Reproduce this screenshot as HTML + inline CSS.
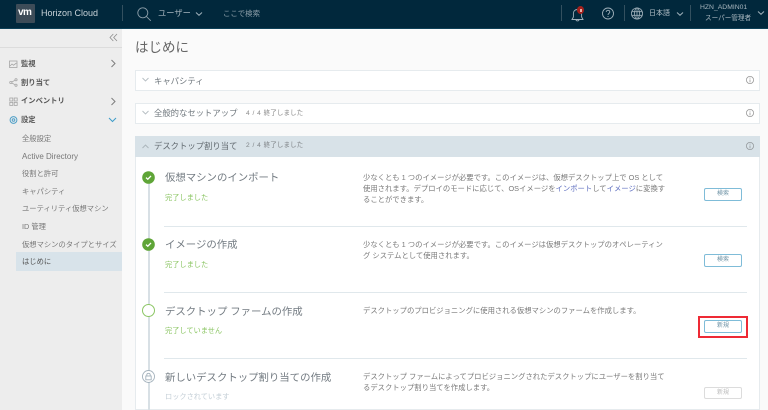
<!DOCTYPE html>
<html lang="ja">
<head>
<meta charset="utf-8">
<title>Horizon Cloud</title>
<style>
html,body{margin:0;padding:0;width:768px;height:410px;overflow:hidden;background:#fafafa;}
body{position:relative;font-family:"Liberation Sans","Noto Sans CJK JP",sans-serif;color:#666;}
div,span,svg{position:absolute;box-sizing:border-box;}
.t{white-space:nowrap;line-height:1;filter:blur(.35px);}
span.i{position:static;}
.nav{font-size:7.3px;color:#777;left:22px;}
.main{font-size:7.3px;color:#555;font-weight:bold;left:21px;}
.panel{left:135px;width:625px;height:21px;background:#fff;border:1px solid #e6ebee;}
.ph{font-size:8.35px;color:#6f777d;left:154px;}
.sub{font-size:6.6px;color:#8b8b8b;left:246px;}
.h{font-size:10.4px;color:#737b82;left:165px;}
.st{font-size:7.2px;color:#8cc665;left:165px;}
.d{font-size:7.34px;color:#7a7a7a;left:363px;line-height:11px;white-space:nowrap;filter:blur(.35px);}
.btn{left:704px;width:38px;height:13px;border:1px solid #7fbcd8;border-radius:2px;background:#fff;font-size:6px;color:#6f93a6;text-align:center;line-height:11px;}
.hr{left:164px;width:583px;height:1px;background:#e0e8ec;}
</style>
</head>
<body>
<!-- header -->
<div style="left:0;top:0;width:768px;height:29px;background:#01283c;border-bottom:1px solid #0d4057;"></div>
<div style="left:16px;top:4px;width:19px;height:19px;background:#3d4c58;border-radius:1px;"></div>
<div class="t" style="left:18px;top:8px;font-size:10px;font-weight:bold;color:#fff;letter-spacing:-.5px;">vm</div>
<div class="t" style="left:41px;top:9px;font-size:9px;color:#c9d3d9;">Horizon Cloud</div>
<div style="left:122px;top:5px;width:1px;height:16px;background:#33505f;"></div>
<svg style="left:136px;top:6px" width="16" height="16" viewBox="0 0 16 16" fill="none" stroke="#8a9ca7" stroke-width=".9"><circle cx="6.8" cy="6.8" r="5"/><path d="M10.4 10.4L14.8 14.8"/></svg>
<div class="t" style="left:158px;top:9.5px;font-size:8.25px;color:#a8b6be;">ユーザー</div>
<svg style="left:194px;top:11px" width="10" height="6" viewBox="0 0 10 6" fill="none" stroke="#9fb0ba"><path d="M2 1.5L5 4.3L8 1.5"/></svg>
<div class="t" style="left:223px;top:9.5px;font-size:7.4px;color:#8fa1ab;">ここで検索</div>
<div style="left:561px;top:5px;width:1px;height:16px;background:#33505f;"></div>
<svg style="left:570px;top:6px" width="16" height="16" viewBox="0 0 16 16" fill="none" stroke="#9fb0ba" stroke-width=".9"><path d="M2 13.5H13L11.6 11V7.5C11.6 5 10 3.5 7.5 3.5S3.4 5 3.4 7.5V11Z"/><path d="M6 13.5C6 15.4 9 15.4 9 13.5"/></svg>
<div style="left:577px;top:6px;width:7px;height:8px;border-radius:50%;background:#a3211d;"></div>
<div style="left:579.5px;top:8.5px;width:2px;height:3px;background:#e8b0a8;"></div>
<svg style="left:601px;top:6px" width="14" height="15" viewBox="0 0 14 15" fill="none" stroke="#9fb0ba" stroke-width=".9"><circle cx="7" cy="7.5" r="5.5"/><path d="M5.2 6C5.2 3.8 8.8 3.8 8.8 6C8.8 7.4 7 7.4 7 9"/><path d="M7 10V11"/></svg>
<div style="left:624px;top:5px;width:1px;height:16px;background:#33505f;"></div>
<svg style="left:630px;top:6px" width="14" height="15" viewBox="0 0 14 15" fill="none" stroke="#9fb0ba" stroke-width=".8"><circle cx="7" cy="7.5" r="5.6"/><ellipse cx="7" cy="7.5" rx="2.5" ry="5.6"/><path d="M7 2V13M1.6 5.7H12.4M1.6 9.3H12.4"/></svg>
<div class="t" style="left:649px;top:9.5px;font-size:7px;color:#b4c0c7;">日本語</div>
<svg style="left:675px;top:11px" width="10" height="6" viewBox="0 0 10 6" fill="none" stroke="#9fb0ba"><path d="M2 1.5L5 4.3L8 1.5"/></svg>
<div style="left:690px;top:5px;width:1px;height:16px;background:#33505f;"></div>
<div class="t" style="left:700px;top:5.4px;font-size:6.8px;color:#a8b6be;">HZN_ADMIN01</div>
<div class="t" style="left:705px;top:16.3px;font-size:6.6px;color:#a8b6be;">スーパー管理者</div>
<svg style="left:756px;top:10px" width="10" height="6" viewBox="0 0 10 6" fill="none" stroke="#9fb0ba"><path d="M2 1.5L5 4.3L8 1.5"/></svg>

<!-- sidebar -->
<div style="left:0;top:29px;width:122px;height:381px;background:#ededed;"></div>
<div style="left:0;top:47px;width:122px;height:1px;background:#dcdcdc;"></div>
<svg style="left:109px;top:33px" width="9" height="9" viewBox="0 0 9 9" fill="none" stroke="#8d8d8d" stroke-width=".8"><path d="M4.3 1L1 4.5L4.3 8M8 1L4.7 4.5L8 8"/></svg>

<svg style="left:9px;top:60px" width="9" height="9" viewBox="0 0 9 9" fill="none" stroke="#a5a5a5" stroke-width=".8"><rect x=".5" y="1" width="7.5" height="6.5"/><path d="M1 6L3 4L4.5 5.2L7.5 3"/></svg>
<div class="t main" style="top:59.5px;">監視</div>
<svg style="left:110px;top:59px" width="7" height="9" viewBox="0 0 7 9" fill="none" stroke="#7d7d7d"><path d="M1.5 1L5 4.5L1.5 8"/></svg>

<svg style="left:9px;top:78px" width="9" height="9" viewBox="0 0 9 9" fill="none" stroke="#a5a5a5" stroke-width=".8"><circle cx="1.8" cy="4.5" r="1.1"/><circle cx="7" cy="1.8" r="1.1"/><circle cx="7" cy="7.2" r="1.1"/><path d="M2.8 4L6 2.3M2.8 5L6 6.7"/></svg>
<div class="t main" style="top:78.5px;">割り当て</div>

<svg style="left:9px;top:97px" width="9" height="9" viewBox="0 0 9 9" fill="none" stroke="#a5a5a5" stroke-width=".8"><rect x=".8" y="1" width="3" height="3"/><rect x="5.2" y="1" width="3" height="3"/><rect x=".8" y="5.4" width="3" height="3"/><rect x="5.2" y="5.4" width="3" height="3"/></svg>
<div class="t main" style="top:97px;">インベントリ</div>
<svg style="left:110px;top:97px" width="7" height="9" viewBox="0 0 7 9" fill="none" stroke="#7d7d7d"><path d="M1.5 1L5 4.5L1.5 8"/></svg>

<svg style="left:9px;top:115px" width="9" height="10" viewBox="0 0 9 10" fill="none" stroke="#4f9fc7" stroke-width="1"><circle cx="4.5" cy="5" r="3.4"/><circle cx="4.5" cy="5" r="1.3"/></svg>
<div class="t main" style="top:116px;">設定</div>
<svg style="left:108px;top:117px" width="9" height="6" viewBox="0 0 9 6" fill="none" stroke="#3d9cc9"><path d="M1 1L4.5 4.5L8 1"/></svg>

<div class="t nav" style="top:134.5px;">全般設定</div>
<div class="t nav" style="top:152.5px;font-size:8px;">Active Directory</div>
<div class="t nav" style="top:169.5px;">役割と許可</div>
<div class="t nav" style="top:187.5px;">キャパシティ</div>
<div class="t nav" style="top:205px;">ユーティリティ仮想マシン</div>
<div class="t nav" style="top:222.5px;">ID 管理</div>
<div class="t nav" style="top:240.5px;">仮想マシンのタイプとサイズ</div>
<div style="left:16px;top:252px;width:106px;height:19px;background:#d8e3ea;"></div>
<div class="t nav" style="top:257.5px;color:#555;">はじめに</div>

<!-- main -->
<div class="t" style="left:135px;top:41px;font-size:13.5px;color:#666;">はじめに</div>

<div class="panel" style="top:70px;"></div>
<svg style="left:141px;top:77px" width="9" height="6" viewBox="0 0 9 6" fill="none" stroke="#b5bdc2" stroke-width=".9"><path d="M1.5 1L4.5 4L7.5 1"/></svg>
<div class="t ph" style="top:76.5px;">キャパシティ</div>
<svg style="left:745px;top:75px" width="10" height="10" viewBox="0 0 10 10" fill="none" stroke="#9a9a9a" stroke-width=".8"><circle cx="5" cy="5" r="3.6"/><path d="M5 4.5V7.4M5 2.6V3.6"/></svg>

<div class="panel" style="top:103px;"></div>
<svg style="left:141px;top:110px" width="9" height="6" viewBox="0 0 9 6" fill="none" stroke="#b5bdc2" stroke-width=".9"><path d="M1.5 1L4.5 4L7.5 1"/></svg>
<div class="t ph" style="top:109px;">全般的なセットアップ</div>
<div class="t sub" style="top:110.5px;word-spacing:1px;">4 / 4 終了しました</div>
<svg style="left:745px;top:108px" width="10" height="10" viewBox="0 0 10 10" fill="none" stroke="#9a9a9a" stroke-width=".8"><circle cx="5" cy="5" r="3.6"/><path d="M5 4.5V7.4M5 2.6V3.6"/></svg>

<div style="left:135px;top:136px;width:625px;height:274px;background:#fff;border:1px solid #e6ebee;"></div>
<div style="left:135px;top:136px;width:625px;height:21px;background:#d8e2e8;"></div>
<svg style="left:141px;top:143px" width="9" height="6" viewBox="0 0 9 6" fill="none" stroke="#aab4ba" stroke-width=".9"><path d="M1.5 5L4.5 2L7.5 5"/></svg>
<div class="t ph" style="top:142px;color:#626a70;">デスクトップ割り当て</div>
<div class="t sub" style="top:143px;color:#808589;word-spacing:1px;">2 / 4 終了しました</div>
<svg style="left:745px;top:141px" width="10" height="10" viewBox="0 0 10 10" fill="none" stroke="#959a9d" stroke-width=".8"><circle cx="5" cy="5" r="3.6"/><path d="M5 4.5V7.4M5 2.6V3.6"/></svg>

<div style="left:148px;top:177px;width:2px;height:233px;background:#d8e0e5;"></div>

<!-- step 1 -->
<svg style="left:142px;top:171px" width="13" height="13" viewBox="0 0 13 13"><circle cx="6.5" cy="6.5" r="6.3" fill="#5fa537"/><path d="M4 6.6L5.8 8.2L9 4.9" fill="none" stroke="#fff" stroke-width="1.3"/></svg>
<div class="t h" style="top:173.5px;">仮想マシンのインポート</div>
<div class="t st" style="top:194px;">完了しました</div>
<div class="d" style="top:172px;">少なくとも 1 つのイメージが必要です。このイメージは、仮想デスクトップ上で OS として<br>使用されます。デプロイのモードに応じて、OSイメージを<span class="i" style="color:#5f6fc0;">インポート</span>して<span class="i" style="color:#5f6fc0;">イメージ</span>に変換す<br>ることができます。</div>
<div class="btn" style="top:188px;">検索</div>
<div class="hr" style="top:226px;"></div>

<!-- step 2 -->
<svg style="left:142px;top:238px" width="13" height="13" viewBox="0 0 13 13"><circle cx="6.5" cy="6.5" r="6.3" fill="#5fa537"/><path d="M4 6.6L5.8 8.2L9 4.9" fill="none" stroke="#fff" stroke-width="1.3"/></svg>
<div class="t h" style="top:241px;">イメージの作成</div>
<div class="t st" style="top:260.5px;">完了しました</div>
<div class="d" style="top:239px;">少なくとも 1 つのイメージが必要です。このイメージは仮想デスクトップのオペレーティン<br>グ システムとして使用されます。</div>
<div class="btn" style="top:254px;">検索</div>
<div class="hr" style="top:292px;"></div>

<!-- step 3 -->
<div style="left:142px;top:304px;width:13px;height:13px;border-radius:50%;background:#fff;border:1.5px solid #8cc665;"></div>
<div class="t h" style="top:307.5px;">デスクトップ ファームの作成</div>
<div class="t st" style="top:326.5px;">完了していません</div>
<div class="d" style="top:305px;">デスクトップのプロビジョニングに使用される仮想マシンのファームを作成します。</div>
<div style="left:698px;top:316px;width:50px;height:22px;border:2px solid #ee2a35;"></div>
<div class="btn" style="top:320px;">新規</div>
<div class="hr" style="top:358px;"></div>

<!-- step 4 -->
<svg style="left:142px;top:370px" width="13" height="13" viewBox="0 0 13 13" fill="#fff" stroke="#a4b2bc" stroke-width=".9"><circle cx="6.5" cy="6.5" r="6"/><rect x="3.8" y="6" width="5.4" height="3.8"/><path d="M4.8 6V4.8C4.8 2.8 8.2 2.8 8.2 4.8V6" fill="none"/></svg>
<div class="t h" style="top:373.5px;">新しいデスクトップ割り当ての作成</div>
<div class="t st" style="top:392.5px;color:#c3ced6;">ロックされています</div>
<div class="d" style="top:371px;">デスクトップ ファームによってプロビジョニングされたデスクトップにユーザーを割り当て<br>るデスクトップ割り当てを作成します。</div>
<div class="btn" style="top:387px;height:12px;border-color:#dcdcdc;color:#bcbcbc;">新規</div>
</body>
</html>
